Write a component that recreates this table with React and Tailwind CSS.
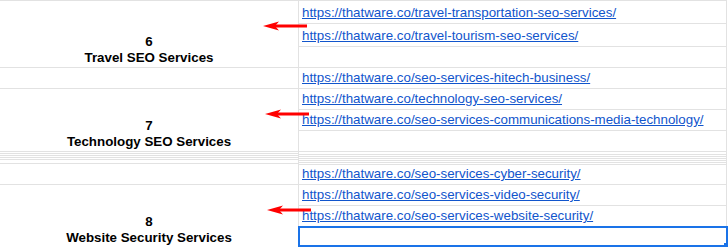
import React from "react";

const LINE = "border-[#e2e2e2]";

const links = [
  "https://thatware.co/travel-transportation-seo-services/",
  "https://thatware.co/travel-tourism-seo-services/",
  null,
  "https://thatware.co/seo-services-hitech-business/",
  "https://thatware.co/technology-seo-services/",
  "https://thatware.co/seo-services-communications-media-technology/",
  null,
  null,
  null,
  null,
  null,
  null,
  null,
  "https://thatware.co/seo-services-cyber-security/",
  "https://thatware.co/seo-services-video-security/",
  "https://thatware.co/seo-services-website-security/",
  null,
];

const rowClasses = [
  "row-start-1",
  "row-start-2",
  "row-start-3",
  "row-start-4",
  "row-start-5",
  "row-start-6",
  "row-start-7",
  "row-start-8",
  "row-start-9",
  "row-start-10",
  "row-start-11",
  "row-start-12",
  "row-start-13",
  "row-start-14",
  "row-start-15",
  "row-start-16",
  "row-start-17",
];

function Label({ num, title, rows }) {
  return (
    <div
      className={`col-start-1 ${rows} flex flex-col items-center justify-end border-r border-b ${LINE} pb-[1px] text-[13.33px] leading-[16px] font-bold text-black`}
    >
      <span>{num}</span>
      <span>{title}</span>
    </div>
  );
}

function Blank({ rows }) {
  return <div className={`col-start-1 ${rows} border-r border-b ${LINE}`} />;
}

function Arrow({ className }) {
  return (
    <svg
      className={`absolute ${className}`}
      width="44"
      height="10"
      viewBox="0 0 44 10"
    >
      <line x1="10" y1="5" x2="44" y2="5" stroke="#ff0000" strokeWidth="3" />
      <polygon points="0,5 16,0.5 12,5 16,9.5" fill="#ff0000" />
    </svg>
  );
}

export default function App() {
  return (
    <div
      className="relative h-[247px] w-[728px] overflow-hidden bg-white"
      style={{ fontFamily: "'Liberation Sans', Arial, sans-serif" }}
    >
      <div
        className={`grid w-[727px] grid-cols-[299px_428px] grid-rows-[23px_23px_21px_21px_21px_21px_21px_2px_2px_2px_2px_2px_2px_21px_21px_21px_21px] border-t ${LINE}`}
      >
        <Label num="6" title="Travel SEO Services" rows="row-start-1 row-span-3" />
        <Blank rows="row-start-4" />
        <Label num="7" title="Technology SEO Services" rows="row-start-5 row-span-3" />
        <Blank rows="row-start-8" />
        <Blank rows="row-start-9" />
        <Blank rows="row-start-10" />
        <Blank rows="row-start-11" />
        <Blank rows="row-start-12 row-span-2" />
        <Blank rows="row-start-14" />
        <Label num="8" title="Website Security Services" rows="row-start-15 row-span-3" />

        {links.map((href, i) => (
          <div
            key={i}
            className={`col-start-2 ${rowClasses[i]} flex items-end overflow-hidden border-r border-b ${LINE} pb-[2px] pl-[3px] text-[13.33px] leading-[16px]`}
          >
            {href && (
              <a href={href} className="whitespace-nowrap text-[#1155cc] underline">
                {href}
              </a>
            )}
          </div>
        ))}
      </div>

      <Arrow className="left-[263px] top-[21px]" />
      <Arrow className="left-[265px] top-[109px]" />
      <Arrow className="left-[267px] top-[205px]" />

      <div className="absolute left-[298px] top-[226px] h-[21px] w-[430px] border-2 border-[#1a73e8]" />
      <div className="absolute left-[724px] top-[243px] h-[4px] w-[4px] bg-[#1a73e8]" />
    </div>
  );
}
